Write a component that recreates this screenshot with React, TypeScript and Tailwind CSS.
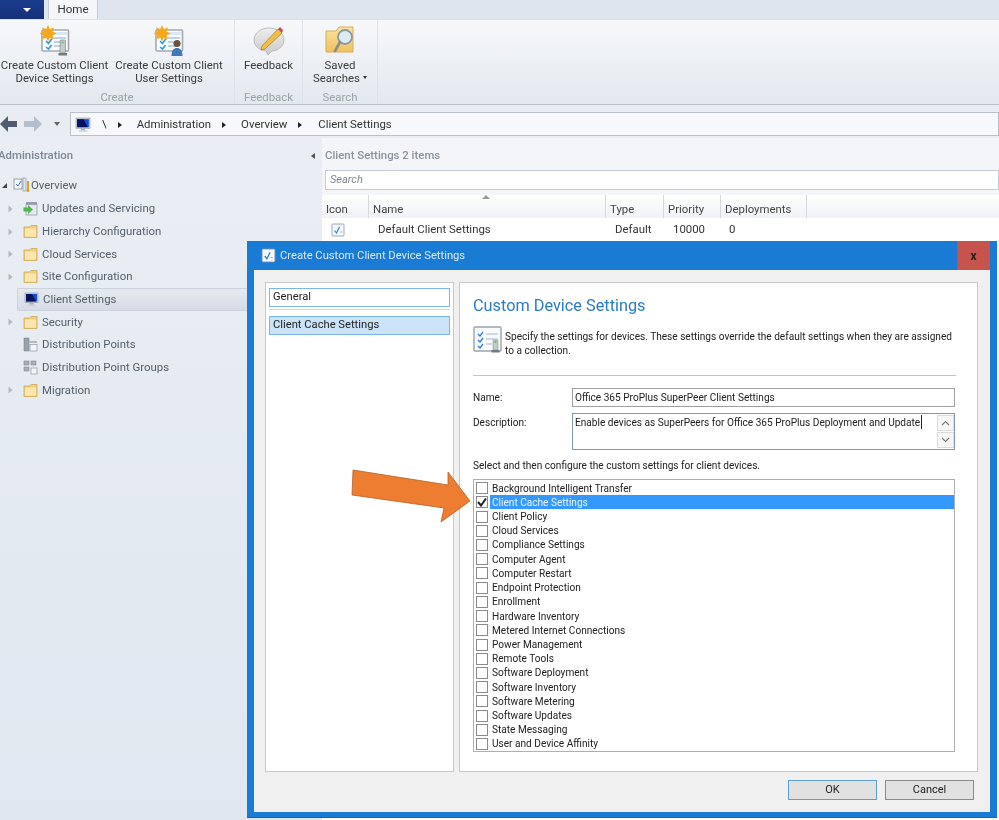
import React from 'react';

const FolderIcon = () => (
  <svg width="15" height="15" viewBox="0 0 15 15" className="shrink-0">
    <path d="M1 3 L1 13.5 L14 13.5 L14 1.5 L8 1.5 L6.5 3 Z" fill="#f0cf7e" stroke="#c9a850" strokeWidth="0.8" />
    <path d="M2 4.5 L13 4.5 L13 12.7 L2 12.7 Z" fill="#fbe7ae" />
  </svg>
);

const MonitorIcon = ({ size = 15 }: { size?: number }) => (
  <svg width={size} height={size} viewBox="0 0 15 15" className="shrink-0">
    <rect x="1" y="1" width="13" height="9.5" fill="#d8dde4" stroke="#7f8a99" strokeWidth="0.6" />
    <path d="M2 2 L13 2 L13 9.5 L2 9.5 Z" fill="#1a48d8" />
    <path d="M2 2 L8 2 L12 9.5 L2 9.5 Z" fill="#06135e" />
    <rect x="5.5" y="11" width="4" height="1.6" fill="#aab2bd" />
    <rect x="3.5" y="12.6" width="8" height="1.2" fill="#c8ced6" />
  </svg>
);

const SettingsPageIcon = ({ badge }: { badge: 'device' | 'user' }) => (
  <svg width="32" height="32" viewBox="0 0 32 32">
    <rect x="3" y="5" width="26.5" height="21" rx="1" fill="#fbfcfd" stroke="#a3a9b0" strokeWidth="1.6" />
    <rect x="15" y="7" width="13" height="3" fill="#d9e6f5" />
    <path d="M7 16 L9.5 18.5 L13 13.5 M7 22 L9.5 24 L12.5 20" fill="none" stroke="#2f9bd8" strokeWidth="1.6" />
    <path d="M15 13 H27 M15 17 H24 M15 21 H22" stroke="#a9c3de" strokeWidth="1.3" />
    <path d="M9 0 L10.8 4 L15 2.6 L13.6 6.5 L17.5 8.5 L13.6 10.3 L15 14.4 L10.8 12.8 L9 16.5 L7.2 12.8 L3 14.4 L4.4 10.3 L0.5 8.5 L4.4 6.5 L3 2.6 L7.2 4 Z" fill="#f6a81c" />
    {badge === 'device' ? (
      <g>
        <rect x="21" y="15" width="5.5" height="13" rx="1" fill="#c4cbc7" stroke="#77807c" strokeWidth="0.6" />
        <circle cx="23.7" cy="17.5" r="1" fill="#6cc070" />
        <rect x="19.5" y="28" width="8.5" height="2.5" fill="#6e7a80" />
      </g>
    ) : (
      <g>
        <circle cx="24" cy="18.5" r="3.6" fill="#6d5138" />
        <path d="M18.5 31 C18.5 25 21 23 24 23 C27 23 29.5 25 29.5 31 Z" fill="#3e78b8" />
      </g>
    )}
  </svg>
);

const FeedbackIcon = () => (
  <svg width="34" height="32" viewBox="0 0 34 32">
    <defs>
      <linearGradient id="bubble" x1="0" y1="0" x2="0" y2="1">
        <stop offset="0" stopColor="#eeeeee" />
        <stop offset="1" stopColor="#c9c9c9" />
      </linearGradient>
    </defs>
    <path d="M17 3 C25 3 32 8 32 15 C32 21 26 26 20 26 L16 30 L14 26 C7 25 2 21 2 15 C2 8 9 3 17 3 Z" fill="url(#bubble)" stroke="#bdbdbd" />
    <path d="M10 21 L26 4 L30 8 L13 24 L9 25 Z" fill="#f0bd45" stroke="#a57b24" strokeWidth="0.7" />
    <path d="M26 4 L28 2 L31 5 L30 8 Z" fill="#c9505a" />
  </svg>
);

const SavedSearchIcon = () => (
  <svg width="32" height="32" viewBox="0 0 32 32">
    <defs>
      <linearGradient id="folder" x1="0" y1="0" x2="0" y2="1">
        <stop offset="0" stopColor="#fbe39f" />
        <stop offset="1" stopColor="#efc25f" />
      </linearGradient>
    </defs>
    <path d="M2 6 L2 27 L29 27 L29 2 L15 2 L12 6 Z" fill="url(#folder)" stroke="#d5ae58" />
    <circle cx="21" cy="12" r="7" fill="#dcecf6" stroke="#8a9aa5" strokeWidth="1.8" />
    <path d="M16 17 L11 26" stroke="#8b8b8b" strokeWidth="2.6" strokeLinecap="round" />
  </svg>
);

const OverviewIcon = () => (
  <svg width="18" height="16" viewBox="0 0 18 16" className="shrink-0">
    <rect x="1" y="2" width="8" height="10" fill="#f5f7fb" stroke="#7f8a99" strokeWidth="0.8" />
    <path d="M3 7 L5 9 L8 4" fill="none" stroke="#3b78c4" strokeWidth="1" />
    <rect x="10" y="1" width="3" height="13" fill="#dfe3ea" stroke="#8a93a0" strokeWidth="0.6" />
    <path d="M15 4 V13" stroke="#d9a520" strokeWidth="2" />
    <circle cx="15" cy="13.5" r="1.5" fill="#d9a520" />
  </svg>
);

const UpdatesIcon = () => (
  <svg width="15" height="15" viewBox="0 0 15 15" className="shrink-0">
    <rect x="3" y="1" width="11" height="2.5" fill="#9a98b8" />
    <rect x="3" y="3.5" width="11" height="10.5" fill="#e6e7f0" stroke="#8d8fa8" strokeWidth="0.7" />
    <path d="M0.5 6.5 H5 V4 L10 8.5 L5 13 V10.5 H0.5 Z" fill="#4cb848" />
  </svg>
);

const DistIcon = ({ group }: { group?: boolean }) => (
  <svg width="15" height="15" viewBox="0 0 15 15" className="shrink-0">
    {group ? (
      <g>
        <rect x="1" y="1" width="5" height="4" fill="#a9afb8" stroke="#757c87" strokeWidth="0.5" />
        <rect x="8" y="1" width="5" height="4" fill="#a9afb8" stroke="#757c87" strokeWidth="0.5" />
        <rect x="1" y="7" width="5" height="4" fill="#a9afb8" stroke="#757c87" strokeWidth="0.5" />
        <rect x="8" y="8" width="6" height="6" fill="#f2f4f8" stroke="#7f8a99" strokeWidth="0.6" />
      </g>
    ) : (
      <g>
        <rect x="1" y="1" width="5" height="13" fill="#9aa1ab" stroke="#757c87" strokeWidth="0.5" />
        <rect x="6" y="4" width="8" height="2" fill="#b5bbc4" />
        <rect x="7" y="7.5" width="7" height="6.5" fill="#f2f4f8" stroke="#7f8a99" strokeWidth="0.6" />
      </g>
    )}
  </svg>
);

const ChecklistIcon = ({ size = 14 }: { size?: number }) => (
  <svg width={size} height={size} viewBox="0 0 14 14" className="shrink-0">
    <rect x="1" y="1" width="12" height="12" rx="1" fill="#f4f7fb" stroke="#8e97a3" strokeWidth="0.8" />
    <path d="M3.5 7.5 L5.5 10 L8.5 4" fill="none" stroke="#2f7fd0" strokeWidth="1.2" />
    <path d="M9 9 H11" stroke="#8e97a3" strokeWidth="0.8" />
  </svg>
);

const Chevron = () => (
  <svg width="5" height="8" viewBox="0 0 5 8" className="shrink-0">
    <path d="M0.5 0.5 L4.5 4 L0.5 7.5 Z" fill="#b4b9c0" />
  </svg>
);

const Crumb = () => <span className="mx-[11px] h-0 w-0 border-y-[3.5px] border-l-[4px] border-y-transparent border-l-[#222]" />;

const RibbonButton = ({ icon, lines, width }: { icon: React.ReactNode; lines: React.ReactNode[]; width: string }) => (
  <div className={`flex flex-col items-center ${width}`}>
    <div className="flex h-[36px] items-center">{icon}</div>
    <div className="text-center text-[11.4px] leading-[12.5px] text-[#3b3b3b]">
      {lines.map((l, i) => (
        <div key={i} className="whitespace-nowrap">{l}</div>
      ))}
    </div>
  </div>
);

const GroupLabel = ({ children }: { children: React.ReactNode }) => (
  <div className="mt-auto text-center text-[11.4px] leading-[14px] text-[#9aa2ab]">{children}</div>
);

const treeItems = [
  { label: 'Updates and Servicing', icon: <UpdatesIcon />, arrow: true },
  { label: 'Hierarchy Configuration', icon: <FolderIcon />, arrow: true },
  { label: 'Cloud Services', icon: <FolderIcon />, arrow: true },
  { label: 'Site Configuration', icon: <FolderIcon />, arrow: true },
  { label: 'Client Settings', icon: <MonitorIcon />, arrow: false, selected: true },
  { label: 'Security', icon: <FolderIcon />, arrow: true },
  { label: 'Distribution Points', icon: <DistIcon />, arrow: false },
  { label: 'Distribution Point Groups', icon: <DistIcon group />, arrow: false },
  { label: 'Migration', icon: <FolderIcon />, arrow: true },
];

const settingsList = [
  'Background Intelligent Transfer',
  'Client Cache Settings',
  'Client Policy',
  'Cloud Services',
  'Compliance Settings',
  'Computer Agent',
  'Computer Restart',
  'Endpoint Protection',
  'Enrollment',
  'Hardware Inventory',
  'Metered Internet Connections',
  'Power Management',
  'Remote Tools',
  'Software Deployment',
  'Software Inventory',
  'Software Metering',
  'Software Updates',
  'State Messaging',
  'User and Device Affinity',
];

const columns = [
  { label: 'Icon', w: 'w-[47px]' },
  { label: 'Name', w: 'w-[237px]' },
  { label: 'Type', w: 'w-[58px]' },
  { label: 'Priority', w: 'w-[57px]' },
  { label: 'Deployments', w: 'w-[86px]' },
];

const Dialog = () => (
  <div className="absolute left-[247px] top-[241px] flex h-[577px] w-[750px] flex-col border-b border-[#4a5866] bg-[#1a7bd4]">
    <div className="flex h-[29px] shrink-0 items-center pl-[14px]">
      <ChecklistIcon size={15} />
      <span className="ml-[4px] pt-[2px] text-[11.2px] text-[#d9e8f7]">Create Custom Client Device Settings</span>
      <div className="ml-auto mr-[7px] flex h-[29px] w-[33px] items-center justify-center self-start bg-[#c7544c] text-[12px] font-bold text-[#222]">x</div>
    </div>
    <div className="mx-[7px] mb-[5px] flex min-h-0 flex-1 flex-col bg-[#f0f0f0] px-[11px] pt-[12px]">
      <div className="flex h-[490px] gap-[5px]">
        <div className="w-[189px] border border-[#c9c9c9] bg-white px-[3px] pt-[5px]">
          <div className="flex h-[19px] items-center border border-[#7db6e8] px-[3px] text-[11.2px] text-[#222]">General</div>
          <div className="mb-[6px] mt-[2px] h-px bg-[#d5d5d5]" />
          <div className="flex h-[19px] items-center border border-[#7db6e8] bg-[#cbe3f8] px-[3px] text-[11.2px] text-[#222]">Client Cache Settings</div>
        </div>
        <div className="flex w-[519px] flex-col border border-[#c9c9c9] bg-white pl-[13px] pr-[21px] pt-[12px]">
          <h2 className="text-[16.3px] leading-[22px] text-[#2a7bc8]">Custom Device Settings</h2>
          <div className="mt-[9px] flex h-[29px] items-start">
            <svg width="30" height="28" viewBox="0 0 30 28" className="shrink-0">
              <rect x="1" y="1" width="27" height="24" rx="1" fill="#f8fafc" stroke="#9aa3ad" strokeWidth="1.4" />
              <path d="M5 8 L7 10 L10 6 M5 14 L7 16 L10 12 M5 20 L7 22 L10 18" fill="none" stroke="#2f7fd0" strokeWidth="1.3" />
              <path d="M13 8 H25 M13 13 H25 M13 18 H19" stroke="#a9b5c2" strokeWidth="1.2" />
              <rect x="20" y="14" width="5" height="10" rx="0.6" fill="#c4cbc7" stroke="#77807c" strokeWidth="0.5" />
              <circle cx="22.5" cy="16" r="1" fill="#5cb85c" />
              <rect x="18.5" y="24" width="8" height="2.5" fill="#6e7a80" />
            </svg>
            <p className="ml-[2px] mt-[4px] w-[455px] text-[10.1px] leading-[13.5px] text-[#222]">
              Specify the settings for devices. These settings override the default settings when they are assigned to a collection.
            </p>
          </div>
          <div className="mt-[20px] h-px bg-[#c4c4c4]" />
          <div className="mt-[12px] flex items-center">
            <span className="w-[99px] text-[10.1px] text-[#222]">Name:</span>
            <div className="flex h-[19px] w-[383px] items-center border border-[#a0a0a0] px-[2px] text-[10.1px] text-[#222]">Office 365 ProPlus SuperPeer Client Settings</div>
          </div>
          <div className="mt-[6px] flex items-start">
            <span className="mt-[2px] w-[99px] text-[10.1px] leading-[15px] text-[#222]">Description:</span>
            <div className="flex h-[37px] w-[383px] justify-between border border-[#7d9ab8] pl-[2px] text-[10.1px] text-[#222]">
              <span className="mt-[1px] h-[14px] min-w-0 whitespace-nowrap border-r border-[#222] pr-[1px]">Enable devices as SuperPeers for Office 365 ProPlus Deployment and Update</span>
              <div className="flex w-[17px] shrink-0 flex-col gap-[1px] py-[1px]">
                <div className="flex h-[16px] items-center justify-center border border-[#dcdcdc] bg-[#f7f7f7]">
                  <svg width="9" height="6" viewBox="0 0 9 6"><path d="M1 5 L4.5 1.5 L8 5" fill="none" stroke="#777" strokeWidth="1.1" /></svg>
                </div>
                <div className="flex h-[16px] items-center justify-center border border-[#dcdcdc] bg-[#f7f7f7]">
                  <svg width="9" height="6" viewBox="0 0 9 6"><path d="M1 1 L4.5 4.5 L8 1" fill="none" stroke="#777" strokeWidth="1.1" /></svg>
                </div>
              </div>
            </div>
          </div>
          <div className="mt-[9px] text-[10.1px] leading-[14px] text-[#222]">Select and then configure the custom settings for client devices.</div>
          <div className="mt-[6px] h-[273px] w-[482px] border border-[#a9b0b8] pt-[1px]">
            {settingsList.map((name) => {
              const selected = name === 'Client Cache Settings';
              return (
                <div key={name} className="flex h-[14.22px] items-center pl-[2px]">
                  <span className="flex h-[12px] w-[12px] shrink-0 items-center justify-center border border-[#8a8a8a] bg-white">
                    {selected && (
                      <svg width="10" height="10" viewBox="0 0 10 10"><path d="M1 5 L4 8.5 L9 1.5" fill="none" stroke="#222" strokeWidth="2" /></svg>
                    )}
                  </span>
                  <span className={`ml-[2px] flex h-full flex-1 items-center pl-[2px] text-[10.1px] ${selected ? 'bg-[#3399ff] text-[#e8f3ff]' : 'text-[#222]'}`}>{name}</span>
                </div>
              );
            })}
          </div>
        </div>
      </div>
      <div className="mt-[8px] flex justify-end gap-[8px] pr-[5px]">
        <div className="flex h-[20px] w-[89px] items-center justify-center border border-[#5a9fd4] bg-[#e1e1e1] text-[11px] text-[#222]">OK</div>
        <div className="flex h-[20px] w-[89px] items-center justify-center border border-[#8a8a8a] bg-[#e1e1e1] text-[11px] text-[#222]">Cancel</div>
      </div>
    </div>
  </div>
);

export default function App() {
  return (
    <div className="relative h-[820px] w-[999px] overflow-hidden bg-white font-['Roboto',sans-serif] blur-[0.4px]">
      {/* tab strip */}
      <div className="flex h-[19px] items-end bg-[#dfe5ee]">
        <div className="flex h-[19px] w-[44px] items-center justify-center bg-gradient-to-b from-[#1a3c8c] to-[#17307a]">
          <span className="ml-[10px] h-0 w-0 border-x-[4px] border-t-[4px] border-x-transparent border-t-white" />
        </div>
        <div className="ml-[4px] flex h-[20px] w-[50px] items-center justify-center border-x border-[#c5ccd6] bg-[#f4f6f9] pt-[1px] text-[11.6px] text-[#333]">Home</div>
      </div>
      {/* ribbon */}
      <div className="flex h-[85px] border-t border-[#dde2e9] bg-gradient-to-b from-[#f7f8fa] to-[#e3e8ef]">
        <div className="flex w-[235px] flex-col border-r border-[#dfe3e9]">
          <div className="flex pt-[3px]">
            <RibbonButton width="w-[109px]" icon={<SettingsPageIcon badge="device" />} lines={['Create Custom Client', 'Device Settings']} />
            <RibbonButton width="w-[120px]" icon={<SettingsPageIcon badge="user" />} lines={['Create Custom Client', 'User Settings']} />
          </div>
          <GroupLabel>Create</GroupLabel>
        </div>
        <div className="flex w-[68px] flex-col border-r border-[#dfe3e9]">
          <div className="pt-[3px]">
            <RibbonButton width="w-full" icon={<FeedbackIcon />} lines={['Feedback']} />
          </div>
          <GroupLabel>Feedback</GroupLabel>
        </div>
        <div className="flex w-[75px] flex-col border-r border-[#dfe3e9]">
          <div className="pt-[3px]">
            <RibbonButton
              width="w-full"
              icon={<SavedSearchIcon />}
              lines={['Saved', <span key="s" className="inline-flex items-center gap-[3px]">Searches<span className="h-0 w-0 border-x-[2.5px] border-t-[3px] border-x-transparent border-t-[#333]" /></span>]}
            />
          </div>
          <GroupLabel>Search</GroupLabel>
        </div>
      </div>
      {/* address bar */}
      <div className="flex h-[34px] items-center border-t border-[#b9bfc8] bg-[#e9edf3] pt-[5px]">
        <div className="flex h-[24px] w-[46px] items-center">
          <svg width="46" height="22" viewBox="0 0 46 22">
            <path d="M0 11 L8 3 V8 H17 V14 H8 V19 Z" fill="#4f5d70" />
            <path d="M42 11 L34 3 V8 H24 V14 H34 V19 Z" fill="#b4bfcd" />
          </svg>
        </div>
        <span className="ml-[8px] h-0 w-0 border-x-[3.5px] border-t-[4px] border-x-transparent border-t-[#666]" />
        <div className="ml-[10px] flex h-[24px] flex-1 items-center border border-[#b9c0ca] bg-[#f6f8fb] pl-[4px] pt-[1px] text-[11.4px] text-[#333]">
          <MonitorIcon size={16} />
          <span className="ml-[11px]">\</span>
          <Crumb />
          <span className="ml-[4px]">Administration</span>
          <Crumb />
          <span className="ml-[4px]">Overview</span>
          <Crumb />
          <span className="ml-[5px]">Client Settings</span>
        </div>
      </div>
      {/* main */}
      <div className="flex h-[682px]">
        <div className="w-[322px] bg-gradient-to-b from-[#eaeef4] to-[#e0e7f0] pt-[8px]">
          <div className="flex h-[20px] items-center justify-between pr-[7px]">
            <span className="-ml-[2px] text-[11.4px] font-medium text-[#7c8794]">Administration</span>
            <span className="h-0 w-0 border-y-[3.5px] border-r-[4px] border-y-transparent border-r-[#555]" />
          </div>
          <div className="mb-[1px] mt-[8px] flex h-[22.67px] items-center pl-[2px] text-[11.4px] text-[#55606c]">
            <span className="h-0 w-0 border-b-[5px] border-l-[5px] border-b-[#444] border-l-transparent" />
            <span className="ml-[6px]"><OverviewIcon /></span>
            <span>Overview</span>
          </div>
          {treeItems.map((item) => (
            <div key={item.label} className={`ml-[17px] flex h-[22.67px] items-center pl-[6px] text-[11.4px] text-[#55606c] ${item.selected ? 'rounded-[2px] border-y border-l border-[#cdd3dc] bg-gradient-to-b from-[#e6eaf0] to-[#d6dce5]' : ''}`}>
              <span className="-ml-[15px] mr-[10px] w-[5px]">{item.arrow && <Chevron />}</span>
              {item.icon}
              <span className="ml-[4px] whitespace-nowrap">{item.label}</span>
            </div>
          ))}
        </div>
        <div className="flex-1 bg-white">
          <div className="bg-[#f3f5f9]">
            <div className="flex h-[32px] items-center pl-[3px] pt-[3px] text-[11.4px] font-medium text-[#8a939e]">Client Settings 2 items</div>
            <div className="ml-[3px] flex h-[20px] items-center border border-[#c6ccd5] bg-white pl-[4px] pt-[1px] text-[11px] italic text-[#7e8791]">Search</div>
            <div className="h-[5px]" />
          </div>
          <div className="flex h-[23px] bg-white text-[11.4px] text-[#444]">
            {columns.map((c) => (
              <div key={c.label} className={`relative flex items-end border-r border-[#d5d9df] bg-gradient-to-b from-white to-[#f0f2f5] pl-[4px] ${c.w}`}>
                {c.label === 'Name' && (
                  <span className="absolute left-[113px] top-[0px] h-0 w-0 border-x-[4px] border-b-[4px] border-x-transparent border-b-[#999]" />
                )}
                {c.label}
              </div>
            ))}
            <div className="flex-1 bg-gradient-to-b from-white to-[#f0f2f5]" />
          </div>
          <div className="flex h-[23px] items-center pt-[1px] text-[11.4px] text-[#333]">
            <div className="w-[47px] pl-[9px]"><ChecklistIcon /></div>
            <div className="w-[237px] pl-[9px]">Default Client Settings</div>
            <div className="w-[58px] pl-[9px]">Default</div>
            <div className="w-[57px] pl-[9px]">10000</div>
            <div className="w-[84px] pl-[8px]">0</div>
          </div>
        </div>
      </div>
      <Dialog />
      {/* callout arrow over the list */}
      <svg width="126" height="60" viewBox="0 0 126 60" className="absolute left-[350px] top-[468px]">
        <path d="M3 2 L98 17 L98 4 L120 33 L91 54 L94 40 L2 27 Z" fill="#ed7d31" stroke="#b85f24" strokeWidth="0.8" />
      </svg>
    </div>
  );
}
